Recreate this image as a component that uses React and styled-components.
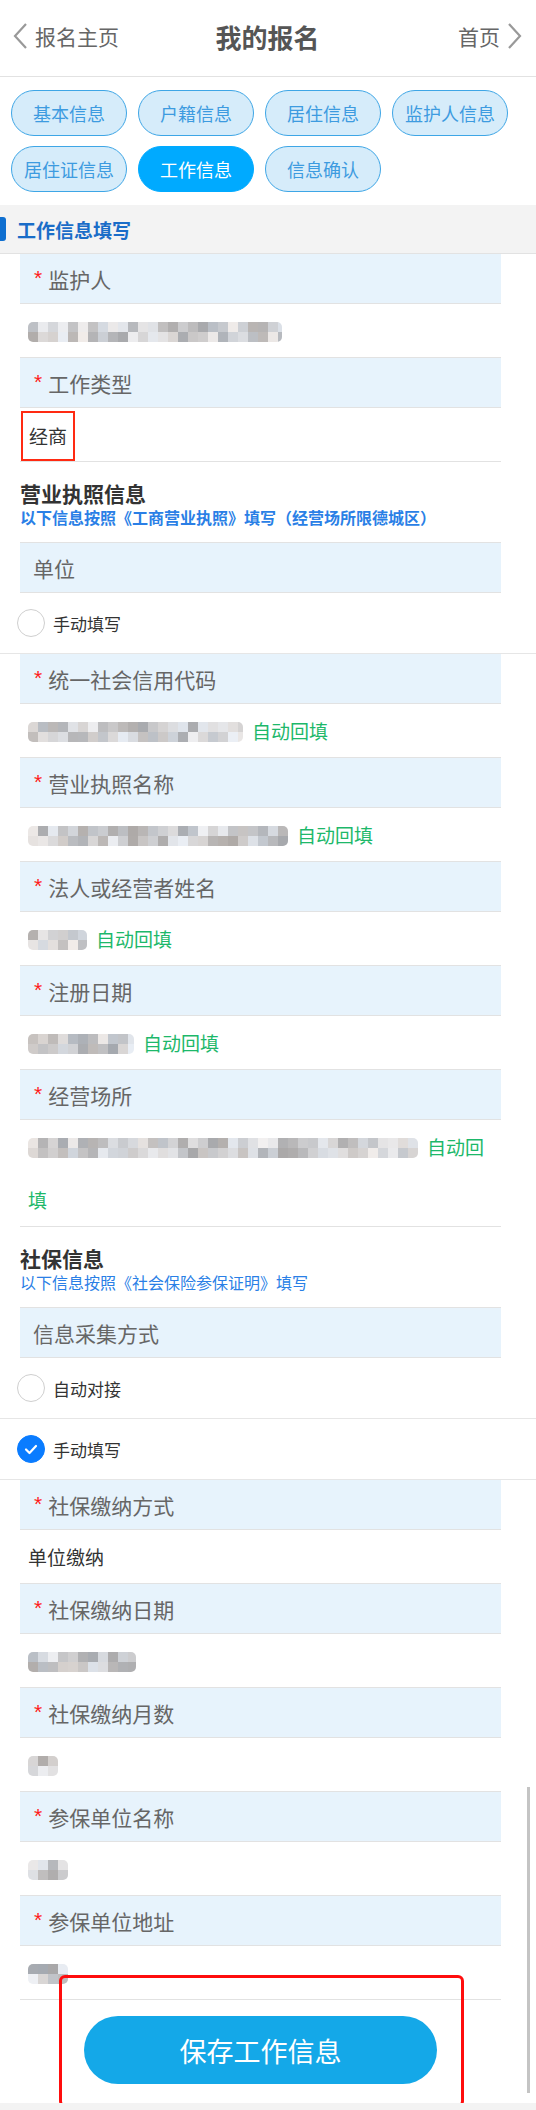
import React from 'react';
import styled, { createGlobalStyle } from 'styled-components';

const GlobalStyle = createGlobalStyle`
  * { box-sizing: border-box; }
  body {
    margin: 0;
    background: #f3f3f3;
    font-family: "Noto Sans CJK SC", "Noto Sans", sans-serif;
  }
`;

const tabs = [
  { name: '基本信息' },
  { name: '户籍信息' },
  { name: '居住信息' },
  { name: '监护人信息' },
  { name: '居住证信息' },
  { name: '工作信息', active: true },
  { name: '信息确认' },
];

// pixel mosaic used in place of the masked personal data
function mosaic(width, seed) {
  let s = seed;
  const rnd = () => {
    s = (s * 9301 + 49297) % 233280;
    return s / 233280;
  };
  const row = () => {
    const stops = [];
    for (let x = 0; x < width; x += 10) {
      const g = Math.round(168 + rnd() * 72);
      const tint = Math.round((rnd() - 0.5) * 10);
      const c = `rgb(${g + tint},${g},${g - tint + 2})`;
      stops.push(`${c} ${x}px ${Math.min(x + 10, width)}px`);
    }
    return `linear-gradient(to right, ${stops.join(', ')})`;
  };
  return `${row()} top / 100% 50% no-repeat, ${row()} bottom / 100% 50% no-repeat`;
}

export default function App() {
  return (
    <Page>
      <GlobalStyle />
      <Header>
        <NavLink>
          <Chevron viewBox="0 0 16 26">
            <polyline points="14,1 3,13 14,25" />
          </Chevron>
          报名主页
        </NavLink>
        <Title>我的报名</Title>
        <NavLink $right>
          首页
          <Chevron viewBox="0 0 16 26">
            <polyline points="2,1 13,13 2,25" />
          </Chevron>
        </NavLink>
      </Header>

      <TabGrid>
        {tabs.map((t) => (
          <Tab key={t.name} $active={t.active}>{t.name}</Tab>
        ))}
      </TabGrid>

      <Band>
        <BandMark />
        工作信息填写
      </Band>

      <Form>
        <Field label="监护人" required>
          <Masked w={254} seed={3} />
        </Field>
        <Field label="工作类型" required>
          <Marked>经商</Marked>
        </Field>

        <GroupHead>
          <GroupTitle>营业执照信息</GroupTitle>
          <GroupNote $bold>以下信息按照《工商营业执照》填写（经营场所限德城区）</GroupNote>
        </GroupHead>

        <Label>单位</Label>
        <RadioRow label="手动填写" />

        <Field label="统一社会信用代码" required>
          <Masked w={215} seed={11} />
          <Auto>自动回填</Auto>
        </Field>
        <Field label="营业执照名称" required>
          <Masked w={260} seed={17} />
          <Auto>自动回填</Auto>
        </Field>
        <Field label="法人或经营者姓名" required>
          <Masked w={59} seed={23} />
          <Auto>自动回填</Auto>
        </Field>
        <Field label="注册日期" required>
          <Masked w={106} seed={29} />
          <Auto>自动回填</Auto>
        </Field>
        <Field label="经营场所" required>
          <Masked w={390} seed={41} />
          <Auto>自动回填</Auto>
        </Field>

        <GroupHead>
          <GroupTitle>社保信息</GroupTitle>
          <GroupNote>以下信息按照《社会保险参保证明》填写</GroupNote>
        </GroupHead>

        <Label>信息采集方式</Label>
        <RadioRow label="自动对接" />
        <RadioRow label="手动填写" checked />

        <Field label="社保缴纳方式" required>单位缴纳</Field>
        <Field label="社保缴纳日期" required>
          <Masked w={108} seed={53} />
        </Field>
        <Field label="社保缴纳月数" required>
          <Masked w={30} seed={61} />
        </Field>
        <Field label="参保单位名称" required>
          <Masked w={40} seed={67} />
        </Field>
        <Field label="参保单位地址" required>
          <Masked w={40} seed={71} />
        </Field>

        <Footer>
          <SaveButton>保存工作信息</SaveButton>
          <RedFrame />
        </Footer>
      </Form>

      <ScrollThumb />
    </Page>
  );
}

function Field({ label, required, children }) {
  return (
    <>
      <Label>
        {required && <Star>*</Star>}
        {label}
      </Label>
      <Value>{children}</Value>
    </>
  );
}

function Masked({ w, seed }) {
  return <Mosaic $w={w} $bg={mosaic(w, seed)} />;
}

function RadioRow({ label, checked }) {
  return (
    <RadioLine>
      <RadioDot $checked={checked}>
        {checked && (
          <svg width="16" height="16" viewBox="0 0 16 16">
            <polyline points="3,8.5 6.5,12 13,5" fill="none" stroke="#fff" strokeWidth="2.2" strokeLinecap="round" strokeLinejoin="round" />
          </svg>
        )}
      </RadioDot>
      {label}
    </RadioLine>
  );
}

const Page = styled.div`
  position: relative;
  background: #fff;
  width: 536px;
`;

const Header = styled.div`
  height: 77px;
  display: flex;
  align-items: center;
  justify-content: space-between;
  padding: 0 13px 4px 12px;
  border-bottom: 1px solid #e2e2e2;
`;

const NavLink = styled.div`
  width: 130px;
  display: flex;
  align-items: center;
  justify-content: ${(p) => (p.$right ? 'flex-end' : 'flex-start')};
  gap: 7px;
  font-size: 21px;
  color: #666;
`;

const Chevron = styled.svg`
  width: 16px;
  height: 26px;
  fill: none;
  stroke: #999;
  stroke-width: 2.2;
`;

const Title = styled.div`
  font-size: 26px;
  font-weight: 700;
  color: #555;
`;

const TabGrid = styled.div`
  display: grid;
  grid-template-columns: repeat(4, 116px);
  column-gap: 11px;
  row-gap: 10px;
  padding: 13px 11px;
`;

const Tab = styled.div`
  height: 46px;
  border-radius: 23px;
  display: flex;
  align-items: center;
  justify-content: center;
  font-size: 18px;
  border: 1px solid ${(p) => (p.$active ? '#00aaff' : '#3ea6e6')};
  background: ${(p) => (p.$active ? '#00aaff' : '#d6ecfa')};
  color: ${(p) => (p.$active ? '#fff' : '#3d9be0')};
`;

const Band = styled.div`
  height: 49px;
  display: flex;
  align-items: center;
  gap: 11px;
  background: #f3f3f3;
  border-bottom: 1px solid #e2e2e2;
  font-size: 19px;
  font-weight: 700;
  color: #1a6dc8;
`;

const BandMark = styled.span`
  width: 6px;
  height: 24px;
  background: #0f6fd0;
  border-radius: 0 3px 3px 0;
`;

const Form = styled.div`
  display: flex;
  flex-direction: column;
`;

const Label = styled.div`
  margin: 0 35px 0 20px;
  height: 50px;
  display: flex;
  align-items: center;
  padding-left: 13px;
  background: #e7f3fc;
  border-bottom: 1px solid #e2e2e2;
  font-size: 21px;
  color: #666;
`;

const Star = styled.span`
  color: #ff1a1a;
  font-family: "Liberation Sans", sans-serif;
  font-size: 21px;
  line-height: 21px;
  margin: 0 6px 0 1px;
  align-self: flex-start;
  padding-top: 13px;
`;

const Value = styled.div`
  margin: 0 35px 0 20px;
  padding: 0 8px;
  line-height: 53px;
  min-height: 54px;
  border-bottom: 1px solid #e2e2e2;
  font-size: 19px;
  color: #333;
`;

const Mosaic = styled.span`
  display: inline-block;
  vertical-align: middle;
  width: ${(p) => p.$w}px;
  height: 20px;
  margin-top: -3px;
  border-radius: 5px;
  background: ${(p) => p.$bg};
  filter: blur(0.4px);
`;

const Auto = styled.span`
  margin-left: 9px;
  color: #1db86a;
`;

const Marked = styled.span`
  display: inline-block;
  vertical-align: top;
  margin: 3px 0 0 -7px;
  height: 50px;
  line-height: 46px;
  padding: 0 6px;
  border: 2px solid #ff2a12;
`;

const GroupHead = styled.div`
  margin: 0 35px 0 20px;
  padding: 18px 0 14px;
  border-bottom: 1px solid #e2e2e2;
`;

const GroupTitle = styled.div`
  font-size: 21px;
  line-height: 26px;
  font-weight: 700;
  color: #333;
`;

const GroupNote = styled.div`
  font-size: 16px;
  line-height: 22px;
  font-weight: ${(p) => (p.$bold ? 700 : 400)};
  color: #2a7fe6;
`;

const RadioLine = styled.div`
  height: 61px;
  display: flex;
  align-items: center;
  gap: 8px;
  padding-left: 17px;
  border-bottom: 1px solid #e6e6e6;
  font-size: 17px;
  color: #333;
`;

const RadioDot = styled.span`
  width: 28px;
  height: 28px;
  border-radius: 50%;
  display: flex;
  align-items: center;
  justify-content: center;
  border: 1px solid ${(p) => (p.$checked ? '#0a7cff' : '#cfcfcf')};
  background: ${(p) => (p.$checked ? '#0a7cff' : '#fff')};
`;

const Footer = styled.div`
  position: relative;
  margin: 0 35px 0 20px;
  padding: 16px 0 19px;
  display: flex;
  justify-content: center;
`;

const SaveButton = styled.button`
  width: 353px;
  height: 68px;
  border: none;
  border-radius: 34px;
  background: #14a8e8;
  color: #fff;
  font-family: inherit;
  font-size: 27px;
`;

const RedFrame = styled.div`
  position: absolute;
  left: 39px;
  top: -25px;
  width: 405px;
  height: 132px;
  border: 3px solid #ff0d0d;
  border-radius: 6px;
  pointer-events: none;
`;

const ScrollThumb = styled.div`
  position: absolute;
  left: 527px;
  top: 1787px;
  width: 3px;
  height: 306px;
  background: #c4c4c4;
`;
